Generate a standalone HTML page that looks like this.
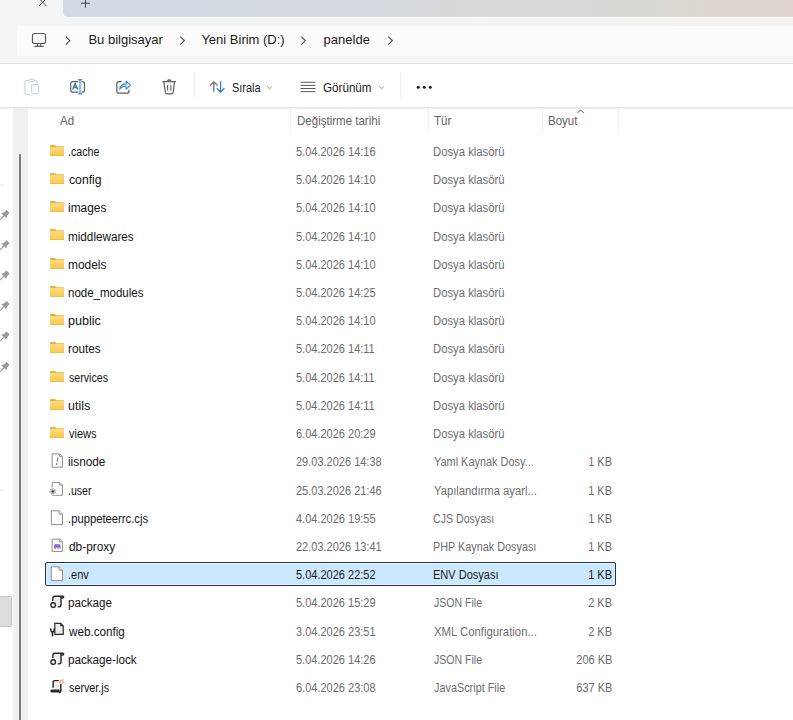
<!DOCTYPE html>
<html><head><meta charset="utf-8">
<style>
*{margin:0;padding:0;box-sizing:border-box}
html,body{width:793px;height:720px;overflow:hidden;background:#fff;font-family:"Liberation Sans",sans-serif}
.abs{position:absolute}
#tabs{position:absolute;left:0;top:0;width:793px;height:63px;background:linear-gradient(90deg,#f3f4f5 0%,#f4f4f4 50%,#f4f3f1 100%)}
#tabgray{position:absolute;left:63px;top:0;width:730px;height:17px;border-bottom-left-radius:5px;box-shadow:0 1px 0 #fafbfb;background:linear-gradient(90deg,#d2dbe3 0%,#d5dadf 45%,#dad9d6 70%,#dfd7ce 100%)}
#addr{position:absolute;left:17px;top:26px;width:800px;height:30px;border-radius:3px;background:#fbfbfb}
#sep1{position:absolute;left:0;top:62px;width:793px;height:2px;background:linear-gradient(#f8f9f9 0,#f8f9f9 50%,#dddfe0 50%,#dddfe0 100%)}
#toolbar{position:absolute;left:0;top:64px;width:793px;height:43px;background:#fff}
#sep2{position:absolute;left:0;top:107px;width:793px;height:2px;background:linear-gradient(#e3e4e3 0,#e3e4e3 50%,#eeeeee 50%,#eeeeee 100%)}
.addrtxt{position:absolute;top:32.2px;font-size:13px;line-height:16px;color:#1b1b1b;white-space:nowrap}
.tbtxt{position:absolute;top:80.8px;font-size:12px;transform-origin:0 0;line-height:14px;color:#1b1b1b;white-space:nowrap}
.hdr{position:absolute;top:113.6px;font-size:12px;line-height:14px;color:#5f6368;white-space:nowrap;transform:scaleX(0.96);transform-origin:0 0}
.colsep{position:absolute;top:108px;width:1px;height:24px;background:#efefef}
.row{position:absolute;left:45px;width:571px;height:24px;border:1px solid transparent;border-radius:2px}
.row.sel{background:#cce8ff;border-color:#263340;box-shadow:inset 0 0 0 1px #e2f1ff}
.row.sel span{color:#1a1a1a}
.row .ic{position:absolute;left:4px;top:3px}
.row span{position:absolute;top:5.2px;font-size:12px;line-height:14px;white-space:nowrap}
.nm{left:21.6px;color:#141414;transform:scaleX(0.94);transform-origin:0 0}
.dt{left:250.3px;color:#6c6c6c;transform:scaleX(0.917);transform-origin:0 0}
.ty{left:387.6px;color:#6e6e6e;transform:scaleX(0.925);transform-origin:0 0}
.sz{right:2.5px;color:#6c6c6c;transform:scaleX(0.917);transform-origin:100% 0}
#navstrip{position:absolute;left:13px;top:109px;width:15px;height:611px;background:#f0f0f0}
#thumb{position:absolute;left:19px;top:154px;width:2px;height:570px;background:#7a7a7a;border-radius:1px;box-shadow:0 0 0 1px #f7f7f7}
</style></head><body>
<div id="tabs"></div>
<div id="tabgray"></div>
<div id="addr"></div>
<div id="sep1"></div>
<div id="toolbar"></div>
<div id="sep2"></div>
<div class="addrtxt" style="left:88.4px">Bu bilgisayar</div>
<div class="addrtxt" style="left:201.4px">Yeni Birim (D:)</div>
<div class="addrtxt" style="left:323.6px">panelde</div>
<div class="tbtxt" style="left:231.6px;transform:scaleX(0.91)">Sırala</div>
<div class="tbtxt" style="left:323px;transform:scaleX(0.97)">Görünüm</div>
<div class="hdr" style="left:60px">Ad</div>
<div class="hdr" style="left:297px">Değiştirme tarihi</div>
<div class="hdr" style="left:434px">Tür</div>
<div class="hdr" style="left:548px">Boyut</div>
<div class="colsep" style="left:290px"></div>
<div class="colsep" style="left:428px"></div>
<div class="colsep" style="left:542px"></div>
<div class="colsep" style="left:618px"></div>
<div id="navstrip"></div>
<div id="thumb"></div>

<!-- tab strip icons -->
<svg class="abs" style="left:0;top:0" width="793" height="64" viewBox="0 0 793 64">
 <path d="M39 -1.5 L46.5 6 M46.5 -1.5 L39 6" stroke="#3c3c3c" stroke-width="1" fill="none"/>
 <path d="M85.5 -3 V7.6 M81 3.2 H90" stroke="#454545" stroke-width="1" fill="none"/>
 <!-- monitor -->
 <rect x="32.5" y="33.5" width="13" height="10" rx="2" stroke="#5c5c5c" stroke-width="1.15" fill="none"/>
 <path d="M37.5 43.5 V46.3 M40.5 43.5 V46.3 M34.3 46.4 H43.7" stroke="#5c5c5c" stroke-width="1.15" fill="none"/>
 <path d="M65.8 36.6 L69.8 40.6 L65.8 44.6 M180.3 36.6 L184.3 40.6 L180.3 44.6 M301.3 36.6 L305.3 40.6 L301.3 44.6 M388.3 36.6 L392.3 40.6 L388.3 44.6" stroke="#474747" stroke-width="1.05" fill="none"/>
</svg>
<!-- toolbar icons -->
<svg class="abs" style="left:0;top:64px" width="793" height="76" viewBox="0 64 793 76">
 <!-- paste disabled -->
 <path d="M29 80.5 h-2.2 a1.8 1.8 0 0 0 -1.8 1.8 v10.6 a1.8 1.8 0 0 0 1.8 1.8 h3.2" stroke="#c9c9c9" stroke-width="1" fill="none"/>
 <path d="M34.5 80.5 h0.7 a1.8 1.8 0 0 1 1.8 1.8 v1.2" stroke="#c9c9c9" stroke-width="1" fill="none"/>
 <rect x="29" y="79.2" width="5.5" height="2.4" rx="1.2" stroke="#c9c9c9" stroke-width="1" fill="none"/>
 <rect x="31.7" y="84.5" width="6.6" height="9.4" rx="1.1" stroke="#b3d2ee" stroke-width="1" fill="none"/>
 <!-- rename -->
 <path d="M78.4 81.6 H72.9 a2.2 2.2 0 0 0 -2.2 2.2 v6.1 a2.2 2.2 0 0 0 2.2 2.2 H78.4 M81.6 81.6 H82.3 a2.2 2.2 0 0 1 2.2 2.2 v6.1 a2.2 2.2 0 0 1 -2.2 2.2 H81.6" stroke="#626262" stroke-width="1.2" fill="none"/>
 <rect x="79" y="80.2" width="2.2" height="13.2" fill="#8cc0ee"/>
 <path d="M77.8 79 H82.4 L81.3 80.7 H78.9 Z M77.8 94.6 H82.4 L81.3 92.9 H78.9 Z" fill="#4a8ed0"/>
 <path d="M72.7 89.6 L75.2 83.5 L77.7 89.6 M73.6 87.5 H76.8" stroke="#2f7bbd" stroke-width="1.4" fill="none"/>
 <!-- share -->
 <path d="M121.5 81.6 H119 a2.2 2.2 0 0 0 -2.2 2.2 v7.2 a2.2 2.2 0 0 0 2.2 2.2 h7.8 a2.2 2.2 0 0 0 2.2 -2.2 v-1.2" stroke="#5a5a5a" stroke-width="1.2" fill="none"/>
 <path d="M119.6 89.2 C120 85.6 122.6 83.9 126.2 84.1 V81.2 L130.6 85.2 L126.2 89.2 V86.3 C123.4 86.2 121.2 87 119.6 89.2 Z" stroke="#2f86d6" stroke-width="1.1" fill="none" stroke-linejoin="round"/>
 <!-- trash -->
 <path d="M162.4 81.6 H175.9" stroke="#5e5e5e" stroke-width="1.3" fill="none"/>
 <path d="M166.6 81.6 Q167.3 79.1 169.2 79.1 Q171.1 79.1 171.8 81.6 Z" fill="#6a6a6a"/>
 <path d="M163.9 81.9 L165.3 92.2 a1.9 1.9 0 0 0 1.9 1.7 H171.3 a1.9 1.9 0 0 0 1.9 -1.7 L174.5 81.9" stroke="#5e5e5e" stroke-width="1.2" fill="none"/>
 <path d="M167.6 85.2 V90.6 M170.8 85.2 V90.6" stroke="#5e5e5e" stroke-width="1.2" fill="none"/>
 <!-- separators -->
 <path d="M577.4 113.1 L580.6 109.9 L583.8 113.1" stroke="#5a5a5a" stroke-width="1" fill="none"/>
 <rect x="194" y="72" width="1" height="28" fill="#f1f1f1"/>
 <rect x="400" y="72" width="1" height="28" fill="#f1f1f1"/>
 <!-- sort -->
 <path d="M213.8 91.8 V82 M209.9 85.6 L213.8 81.8 L217.7 85.6" stroke="#6a6a6a" stroke-width="1.25" fill="none"/>
 <path d="M220.6 81.3 V91.8 M216.8 88.2 L220.6 92 L224.4 88.2" stroke="#2e7fcf" stroke-width="1.25" fill="none"/>
 <path d="M267.2 86.5 L269.6 88.9 L272 86.5" stroke="#8a8a8a" stroke-width="0.9" fill="none"/>
 <!-- view -->
 <path d="M300.5 82.3 H315.5 M300.5 85.4 H315.5 M300.5 88.5 H315.5 M300.5 91.6 H315.5" stroke="#5a5a5a" stroke-width="1" fill="none"/>
 <path d="M379.2 86.5 L381.6 88.9 L384 86.5" stroke="#8a8a8a" stroke-width="0.9" fill="none"/>
 <!-- more -->
 <circle cx="418.3" cy="87.2" r="1.5" fill="#1a1a1a"/>
 <circle cx="424.3" cy="87.2" r="1.5" fill="#1a1a1a"/>
 <circle cx="430.3" cy="87.2" r="1.5" fill="#1a1a1a"/>
</svg>
<!-- nav pins -->
<svg class="abs" style="left:0;top:108px" width="13" height="612" viewBox="0 108 13 612">
 <rect x="0" y="184.5" width="4" height="1" fill="#e3e3e3"/>
 <rect x="0" y="489.5" width="4" height="1" fill="#e3e3e3"/>
 <rect x="-1" y="596.5" width="12.5" height="30" rx="1" fill="#dcdcdc" stroke="#c4c4c4" stroke-width="1"/>
 <g transform="translate(4.5 215) rotate(45)"><path d="M-2.2 -5 H2.2 V-1.4 L3.6 1 H-3.6 L-2.2 -1.4 Z" fill="#979b9f"/><path d="M0 1 V6.5" stroke="#979b9f" stroke-width="1.2"/></g><g transform="translate(4.5 245.3) rotate(45)"><path d="M-2.2 -5 H2.2 V-1.4 L3.6 1 H-3.6 L-2.2 -1.4 Z" fill="#979b9f"/><path d="M0 1 V6.5" stroke="#979b9f" stroke-width="1.2"/></g><g transform="translate(4.5 275.6) rotate(45)"><path d="M-2.2 -5 H2.2 V-1.4 L3.6 1 H-3.6 L-2.2 -1.4 Z" fill="#979b9f"/><path d="M0 1 V6.5" stroke="#979b9f" stroke-width="1.2"/></g><g transform="translate(4.5 306) rotate(45)"><path d="M-2.2 -5 H2.2 V-1.4 L3.6 1 H-3.6 L-2.2 -1.4 Z" fill="#979b9f"/><path d="M0 1 V6.5" stroke="#979b9f" stroke-width="1.2"/></g><g transform="translate(4.5 336.6) rotate(45)"><path d="M-2.2 -5 H2.2 V-1.4 L3.6 1 H-3.6 L-2.2 -1.4 Z" fill="#979b9f"/><path d="M0 1 V6.5" stroke="#979b9f" stroke-width="1.2"/></g><g transform="translate(4.5 367) rotate(45)"><path d="M-2.2 -5 H2.2 V-1.4 L3.6 1 H-3.6 L-2.2 -1.4 Z" fill="#979b9f"/><path d="M0 1 V6.5" stroke="#979b9f" stroke-width="1.2"/></g>
</svg>

<div class="row" style="top:138.80px"><svg class="ic" width="16" height="18" viewBox="0 0 16 18" style="overflow:visible"><defs><linearGradient id="fg0" x1="0" y1="0" x2="0" y2="1"><stop offset="0" stop-color="#fddb7a"/><stop offset="1" stop-color="#f6c84e"/></linearGradient></defs><path d="M0 3 Q0 1.9 1.1 1.9 H4.4 Q5.2 1.9 5.7 2.6 L6.2 3.2 H13.8 V12.9 H0 Z" fill="#e8b23c"/><rect x="0" y="4.5" width="13.8" height="8.4" fill="url(#fg0)"/><rect x="0" y="4.5" width="13.8" height="0.6" fill="#ffe7a3"/><rect x="0" y="12.3" width="13.8" height="0.6" fill="#ecba45"/></svg><span class="nm" style="left:21.71px;transform:scaleX(0.8882)">.cache</span><span class="dt">5.04.2026 14:16</span><span class="ty" style="left:387.06px;transform:scaleX(0.9405)">Dosya klasörü</span><span class="sz"></span></div>
<div class="row" style="top:167.02px"><svg class="ic" width="16" height="18" viewBox="0 0 16 18" style="overflow:visible"><defs><linearGradient id="fg1" x1="0" y1="0" x2="0" y2="1"><stop offset="0" stop-color="#fddb7a"/><stop offset="1" stop-color="#f6c84e"/></linearGradient></defs><path d="M0 3 Q0 1.9 1.1 1.9 H4.4 Q5.2 1.9 5.7 2.6 L6.2 3.2 H13.8 V12.9 H0 Z" fill="#e8b23c"/><rect x="0" y="4.5" width="13.8" height="8.4" fill="url(#fg1)"/><rect x="0" y="4.5" width="13.8" height="0.6" fill="#ffe7a3"/><rect x="0" y="12.3" width="13.8" height="0.6" fill="#ecba45"/></svg><span class="nm" style="left:22.60px;transform:scaleX(1.0161)">config</span><span class="dt">5.04.2026 14:10</span><span class="ty" style="left:387.06px;transform:scaleX(0.9405)">Dosya klasörü</span><span class="sz"></span></div>
<div class="row" style="top:195.23px"><svg class="ic" width="16" height="18" viewBox="0 0 16 18" style="overflow:visible"><defs><linearGradient id="fg2" x1="0" y1="0" x2="0" y2="1"><stop offset="0" stop-color="#fddb7a"/><stop offset="1" stop-color="#f6c84e"/></linearGradient></defs><path d="M0 3 Q0 1.9 1.1 1.9 H4.4 Q5.2 1.9 5.7 2.6 L6.2 3.2 H13.8 V12.9 H0 Z" fill="#e8b23c"/><rect x="0" y="4.5" width="13.8" height="8.4" fill="url(#fg2)"/><rect x="0" y="4.5" width="13.8" height="0.6" fill="#ffe7a3"/><rect x="0" y="12.3" width="13.8" height="0.6" fill="#ecba45"/></svg><span class="nm" style="left:21.61px;transform:scaleX(0.9919)">images</span><span class="dt">5.04.2026 14:10</span><span class="ty" style="left:387.06px;transform:scaleX(0.9405)">Dosya klasörü</span><span class="sz"></span></div>
<div class="row" style="top:223.44px"><svg class="ic" width="16" height="18" viewBox="0 0 16 18" style="overflow:visible"><defs><linearGradient id="fg3" x1="0" y1="0" x2="0" y2="1"><stop offset="0" stop-color="#fddb7a"/><stop offset="1" stop-color="#f6c84e"/></linearGradient></defs><path d="M0 3 Q0 1.9 1.1 1.9 H4.4 Q5.2 1.9 5.7 2.6 L6.2 3.2 H13.8 V12.9 H0 Z" fill="#e8b23c"/><rect x="0" y="4.5" width="13.8" height="8.4" fill="url(#fg3)"/><rect x="0" y="4.5" width="13.8" height="0.6" fill="#ffe7a3"/><rect x="0" y="12.3" width="13.8" height="0.6" fill="#ecba45"/></svg><span class="nm" style="left:21.62px;transform:scaleX(0.9758)">middlewares</span><span class="dt">5.04.2026 14:10</span><span class="ty" style="left:387.06px;transform:scaleX(0.9405)">Dosya klasörü</span><span class="sz"></span></div>
<div class="row" style="top:251.66px"><svg class="ic" width="16" height="18" viewBox="0 0 16 18" style="overflow:visible"><defs><linearGradient id="fg4" x1="0" y1="0" x2="0" y2="1"><stop offset="0" stop-color="#fddb7a"/><stop offset="1" stop-color="#f6c84e"/></linearGradient></defs><path d="M0 3 Q0 1.9 1.1 1.9 H4.4 Q5.2 1.9 5.7 2.6 L6.2 3.2 H13.8 V12.9 H0 Z" fill="#e8b23c"/><rect x="0" y="4.5" width="13.8" height="8.4" fill="url(#fg4)"/><rect x="0" y="4.5" width="13.8" height="0.6" fill="#ffe7a3"/><rect x="0" y="12.3" width="13.8" height="0.6" fill="#ecba45"/></svg><span class="nm" style="left:21.61px;transform:scaleX(0.9946)">models</span><span class="dt">5.04.2026 14:10</span><span class="ty" style="left:387.06px;transform:scaleX(0.9405)">Dosya klasörü</span><span class="sz"></span></div>
<div class="row" style="top:279.88px"><svg class="ic" width="16" height="18" viewBox="0 0 16 18" style="overflow:visible"><defs><linearGradient id="fg5" x1="0" y1="0" x2="0" y2="1"><stop offset="0" stop-color="#fddb7a"/><stop offset="1" stop-color="#f6c84e"/></linearGradient></defs><path d="M0 3 Q0 1.9 1.1 1.9 H4.4 Q5.2 1.9 5.7 2.6 L6.2 3.2 H13.8 V12.9 H0 Z" fill="#e8b23c"/><rect x="0" y="4.5" width="13.8" height="8.4" fill="url(#fg5)"/><rect x="0" y="4.5" width="13.8" height="0.6" fill="#ffe7a3"/><rect x="0" y="12.3" width="13.8" height="0.6" fill="#ecba45"/></svg><span class="nm" style="left:21.64px;transform:scaleX(0.9584)">node_modules</span><span class="dt">5.04.2026 14:25</span><span class="ty" style="left:387.06px;transform:scaleX(0.9405)">Dosya klasörü</span><span class="sz"></span></div>
<div class="row" style="top:308.09px"><svg class="ic" width="16" height="18" viewBox="0 0 16 18" style="overflow:visible"><defs><linearGradient id="fg6" x1="0" y1="0" x2="0" y2="1"><stop offset="0" stop-color="#fddb7a"/><stop offset="1" stop-color="#f6c84e"/></linearGradient></defs><path d="M0 3 Q0 1.9 1.1 1.9 H4.4 Q5.2 1.9 5.7 2.6 L6.2 3.2 H13.8 V12.9 H0 Z" fill="#e8b23c"/><rect x="0" y="4.5" width="13.8" height="8.4" fill="url(#fg6)"/><rect x="0" y="4.5" width="13.8" height="0.6" fill="#ffe7a3"/><rect x="0" y="12.3" width="13.8" height="0.6" fill="#ecba45"/></svg><span class="nm" style="left:21.55px;transform:scaleX(1.0467)">public</span><span class="dt">5.04.2026 14:10</span><span class="ty" style="left:387.06px;transform:scaleX(0.9405)">Dosya klasörü</span><span class="sz"></span></div>
<div class="row" style="top:336.31px"><svg class="ic" width="16" height="18" viewBox="0 0 16 18" style="overflow:visible"><defs><linearGradient id="fg7" x1="0" y1="0" x2="0" y2="1"><stop offset="0" stop-color="#fddb7a"/><stop offset="1" stop-color="#f6c84e"/></linearGradient></defs><path d="M0 3 Q0 1.9 1.1 1.9 H4.4 Q5.2 1.9 5.7 2.6 L6.2 3.2 H13.8 V12.9 H0 Z" fill="#e8b23c"/><rect x="0" y="4.5" width="13.8" height="8.4" fill="url(#fg7)"/><rect x="0" y="4.5" width="13.8" height="0.6" fill="#ffe7a3"/><rect x="0" y="12.3" width="13.8" height="0.6" fill="#ecba45"/></svg><span class="nm" style="left:21.62px;transform:scaleX(0.9812)">routes</span><span class="dt">5.04.2026 14:11</span><span class="ty" style="left:387.06px;transform:scaleX(0.9405)">Dosya klasörü</span><span class="sz"></span></div>
<div class="row" style="top:364.52px"><svg class="ic" width="16" height="18" viewBox="0 0 16 18" style="overflow:visible"><defs><linearGradient id="fg8" x1="0" y1="0" x2="0" y2="1"><stop offset="0" stop-color="#fddb7a"/><stop offset="1" stop-color="#f6c84e"/></linearGradient></defs><path d="M0 3 Q0 1.9 1.1 1.9 H4.4 Q5.2 1.9 5.7 2.6 L6.2 3.2 H13.8 V12.9 H0 Z" fill="#e8b23c"/><rect x="0" y="4.5" width="13.8" height="8.4" fill="url(#fg8)"/><rect x="0" y="4.5" width="13.8" height="0.6" fill="#ffe7a3"/><rect x="0" y="12.3" width="13.8" height="0.6" fill="#ecba45"/></svg><span class="nm" style="left:22.60px;transform:scaleX(0.8864)">services</span><span class="dt">5.04.2026 14:11</span><span class="ty" style="left:387.06px;transform:scaleX(0.9405)">Dosya klasörü</span><span class="sz"></span></div>
<div class="row" style="top:392.74px"><svg class="ic" width="16" height="18" viewBox="0 0 16 18" style="overflow:visible"><defs><linearGradient id="fg9" x1="0" y1="0" x2="0" y2="1"><stop offset="0" stop-color="#fddb7a"/><stop offset="1" stop-color="#f6c84e"/></linearGradient></defs><path d="M0 3 Q0 1.9 1.1 1.9 H4.4 Q5.2 1.9 5.7 2.6 L6.2 3.2 H13.8 V12.9 H0 Z" fill="#e8b23c"/><rect x="0" y="4.5" width="13.8" height="8.4" fill="url(#fg9)"/><rect x="0" y="4.5" width="13.8" height="0.6" fill="#ffe7a3"/><rect x="0" y="12.3" width="13.8" height="0.6" fill="#ecba45"/></svg><span class="nm" style="left:21.56px;transform:scaleX(1.0400)">utils</span><span class="dt">5.04.2026 14:11</span><span class="ty" style="left:387.06px;transform:scaleX(0.9405)">Dosya klasörü</span><span class="sz"></span></div>
<div class="row" style="top:420.95px"><svg class="ic" width="16" height="18" viewBox="0 0 16 18" style="overflow:visible"><defs><linearGradient id="fg10" x1="0" y1="0" x2="0" y2="1"><stop offset="0" stop-color="#fddb7a"/><stop offset="1" stop-color="#f6c84e"/></linearGradient></defs><path d="M0 3 Q0 1.9 1.1 1.9 H4.4 Q5.2 1.9 5.7 2.6 L6.2 3.2 H13.8 V12.9 H0 Z" fill="#e8b23c"/><rect x="0" y="4.5" width="13.8" height="8.4" fill="url(#fg10)"/><rect x="0" y="4.5" width="13.8" height="0.6" fill="#ffe7a3"/><rect x="0" y="12.3" width="13.8" height="0.6" fill="#ecba45"/></svg><span class="nm" style="left:22.60px;transform:scaleX(0.9200)">views</span><span class="dt">6.04.2026 20:29</span><span class="ty" style="left:387.06px;transform:scaleX(0.9405)">Dosya klasörü</span><span class="sz"></span></div>
<div class="row" style="top:449.17px"><svg class="ic" width="16" height="18" viewBox="0 0 16 18" style="overflow:visible"><path d="M2.1 0.9 H9.8 L12.4 3.5 V14.2 H2.1 Z" fill="#fff" stroke="#8c8c8c" stroke-width="1"/><path d="M9.6 0.9 V3.7 H12.4" fill="#e4e4e4" stroke="#8c8c8c" stroke-width="0.9"/><path d="M7.2 4.4 H8.5 L7.5 9 H6.7 Z" fill="#7a6cc0"/><circle cx="6.75" cy="10.95" r="0.8" fill="#3e3a66"/></svg><span class="nm" style="left:21.62px;transform:scaleX(0.9838)">iisnode</span><span class="dt">29.03.2026 14:38</span><span class="ty" style="left:388.00px;transform:scaleX(0.9101)">Yaml Kaynak Dosy...</span><span class="sz">1 KB</span></div>
<div class="row" style="top:477.38px"><svg class="ic" width="16" height="18" viewBox="0 0 16 18" style="overflow:visible"><path d="M2.2 1.4 H9.8 L12.4 4 V14.3 H2.2 Z" fill="#fff" stroke="#8c8c8c" stroke-width="1"/><path d="M9.6 1.4 V4.2 H12.4" fill="#e4e4e4" stroke="#8c8c8c" stroke-width="0.9"/><path d="M4.5 5.5 H10 M5.5 7.5 H10 M6.5 9.5 H10" stroke="#ececec" stroke-width="0.8"/><circle cx="2.7" cy="10.4" r="3.9" fill="#fff"/><circle cx="2.7" cy="10.4" r="2.6" fill="#c9c9c9" stroke="#b4b4b4" stroke-width="1.6" stroke-dasharray="1.4 0.9"/><circle cx="2.8" cy="10.6" r="1.25" fill="#404040"/></svg><span class="nm" style="left:21.72px;transform:scaleX(0.8808)">.user</span><span class="dt">25.03.2026 21:46</span><span class="ty" style="left:388.00px;transform:scaleX(0.9358)">Yapılandırma ayarl...</span><span class="sz">1 KB</span></div>
<div class="row" style="top:505.60px"><svg class="ic" width="16" height="18" viewBox="0 0 16 18" style="overflow:visible"><path d="M1.3 0.8 H9.2 L12.5 4.1 V14.6 H1.3 Z" fill="#fff" stroke="#8c8c8c" stroke-width="1"/><path d="M9.1 0.8 V4.2 H12.5" fill="#e4e4e4" stroke="#8c8c8c" stroke-width="0.9"/></svg><span class="nm" style="left:21.66px;transform:scaleX(0.9381)">.puppeteerrc.cjs</span><span class="dt">4.04.2026 19:55</span><span class="ty" style="left:387.12px;transform:scaleX(0.8836)">CJS Dosyası</span><span class="sz">1 KB</span></div>
<div class="row" style="top:533.81px"><svg class="ic" width="16" height="18" viewBox="0 0 16 18" style="overflow:visible"><path d="M2.1 1.1 H9.8 L12.4 3.7 V13.4 H2.1 Z" fill="#fff" stroke="#8c8c8c" stroke-width="1"/><path d="M9.6 1.1 V3.9 H12.4" fill="#e4e4e4" stroke="#8c8c8c" stroke-width="0.9"/><path d="M4 2.8 H8 M4 4.4 H7" stroke="#e4e4e4" stroke-width="0.7"/><path d="M3.9 7.6 Q4 5.9 6 5.9 H8.8 Q10.6 6 10.5 8 V10.8 H9.4 V9.6 H8.4 V10.8 H7.3 V9.6 H6.2 V10.8 H5.1 V9.4 Q4.6 9.6 4.4 10.4 H3.8 Q3.7 9 4.2 8.6 Q3.9 8.2 3.9 7.6 Z" fill="#9063cc"/><path d="M6 6.8 H9.3" stroke="#b896e4" stroke-width="0.8"/></svg><span class="nm" style="left:22.60px;transform:scaleX(0.9894)">db-proxy</span><span class="dt">22.03.2026 13:41</span><span class="ty" style="left:387.10px;transform:scaleX(0.9027)">PHP Kaynak Dosyası</span><span class="sz">1 KB</span></div>
<div class="row sel" style="top:562.02px"><svg class="ic" width="16" height="18" viewBox="0 0 16 18" style="overflow:visible"><path d="M1.3 0.8 H9.2 L12.5 4.1 V14.6 H1.3 Z" fill="#fff" stroke="#8c8c8c" stroke-width="1"/><path d="M9.1 0.8 V4.2 H12.5" fill="#e4e4e4" stroke="#8c8c8c" stroke-width="0.9"/></svg><span class="nm" style="left:21.69px;transform:scaleX(0.9136)">.env</span><span class="dt">5.04.2026 22:52</span><span class="ty" style="left:387.08px;transform:scaleX(0.9188)">ENV Dosyası</span><span class="sz">1 KB</span></div>
<div class="row" style="top:590.24px"><svg class="ic" width="16" height="18" viewBox="0 0 16 18" style="overflow:visible"><path d="M4.2 3.2 H10.4 V11.3 Q10.4 12.3 9.3 12.3 H7.5 V8 H4.2 Z" fill="#ececec"/><path d="M2.9 7 V4 Q2.9 2.2 4.7 2.2 H12.8 Q13.7 2.2 13.7 3.1 Q13.7 4 12.7 4 H11" fill="none" stroke="#262626" stroke-width="1.4"/><path d="M11 2.8 V11.1 Q11 12.9 9.2 12.9 H7.7" fill="none" stroke="#262626" stroke-width="1.4"/><circle cx="3.2" cy="11.1" r="2.35" fill="#f4f4f4" stroke="#262626" stroke-width="1.35"/></svg><span class="nm" style="left:21.63px;transform:scaleX(0.9682)">package</span><span class="dt">5.04.2026 15:29</span><span class="ty" style="left:388.00px;transform:scaleX(0.8778)">JSON File</span><span class="sz">2 KB</span></div>
<div class="row" style="top:618.45px"><svg class="ic" width="16" height="18" viewBox="0 0 16 18" style="overflow:visible"><path d="M4.8 1.3 H10.6 L13.2 3.9 V12.4 H4.8 Z" fill="#ececec" stroke="#262626" stroke-width="1.2"/><path d="M10.3 0.9 L13.6 4.2 H10.3 Z" fill="#262626"/><path d="M0.8 6.3 C0.4 8.6 1.3 9.8 2.5 9.9 C3.7 9.8 4.6 8.6 4.2 6.3" fill="none" stroke="#1e1e1e" stroke-width="1.5"/><rect x="1.7" y="9.4" width="1.6" height="5" rx="0.5" fill="#1e1e1e"/></svg><span class="nm" style="left:22.60px;transform:scaleX(0.9737)">web.config</span><span class="dt">3.04.2026 23:51</span><span class="ty" style="left:388.00px;transform:scaleX(0.9444)">XML Configuration...</span><span class="sz">2 KB</span></div>
<div class="row" style="top:646.67px"><svg class="ic" width="16" height="18" viewBox="0 0 16 18" style="overflow:visible"><path d="M4.2 3.2 H10.4 V11.3 Q10.4 12.3 9.3 12.3 H7.5 V8 H4.2 Z" fill="#ececec"/><path d="M2.9 7 V4 Q2.9 2.2 4.7 2.2 H12.8 Q13.7 2.2 13.7 3.1 Q13.7 4 12.7 4 H11" fill="none" stroke="#262626" stroke-width="1.4"/><path d="M11 2.8 V11.1 Q11 12.9 9.2 12.9 H7.7" fill="none" stroke="#262626" stroke-width="1.4"/><circle cx="3.2" cy="11.1" r="2.35" fill="#f4f4f4" stroke="#262626" stroke-width="1.35"/></svg><span class="nm" style="left:21.63px;transform:scaleX(0.9714)">package-lock</span><span class="dt">5.04.2026 14:26</span><span class="ty" style="left:388.00px;transform:scaleX(0.8778)">JSON File</span><span class="sz">206 KB</span></div>
<div class="row" style="top:674.88px"><svg class="ic" width="16" height="18" viewBox="0 0 16 18" style="overflow:visible"><path d="M4 2.4 H9.8 V10.6 H4 Z" fill="#efefef"/><path d="M3.1 8.8 V3.3 Q3.1 1.6 4.8 1.6 H8.8" fill="none" stroke="#262626" stroke-width="1.45"/><path d="M0.3 11.9 Q0.3 10.4 1.8 10.4 H9.6 V13.4 H1.8 Q0.3 13.4 0.3 11.9 Z" fill="#262626"/><path d="M10.8 4.8 V11.5 Q10.8 13.4 8.9 13.4" fill="none" stroke="#262626" stroke-width="1.45"/><path d="M10.4 0.7 V3.1 Q10.4 4 9.5 4" fill="none" stroke="#ef9560" stroke-width="1.1"/><path d="M13.8 0.9 H12.5 Q11.7 0.9 11.7 1.7 Q11.7 2.4 12.5 2.4 Q13.5 2.4 13.5 3.2 Q13.5 4 12.6 4 H11.6" fill="none" stroke="#ef9560" stroke-width="1"/></svg><span class="nm" style="left:22.60px;transform:scaleX(0.8977)">server.js</span><span class="dt">6.04.2026 23:08</span><span class="ty" style="left:388.00px;transform:scaleX(0.9051)">JavaScript File</span><span class="sz">637 KB</span></div>
</body></html>
